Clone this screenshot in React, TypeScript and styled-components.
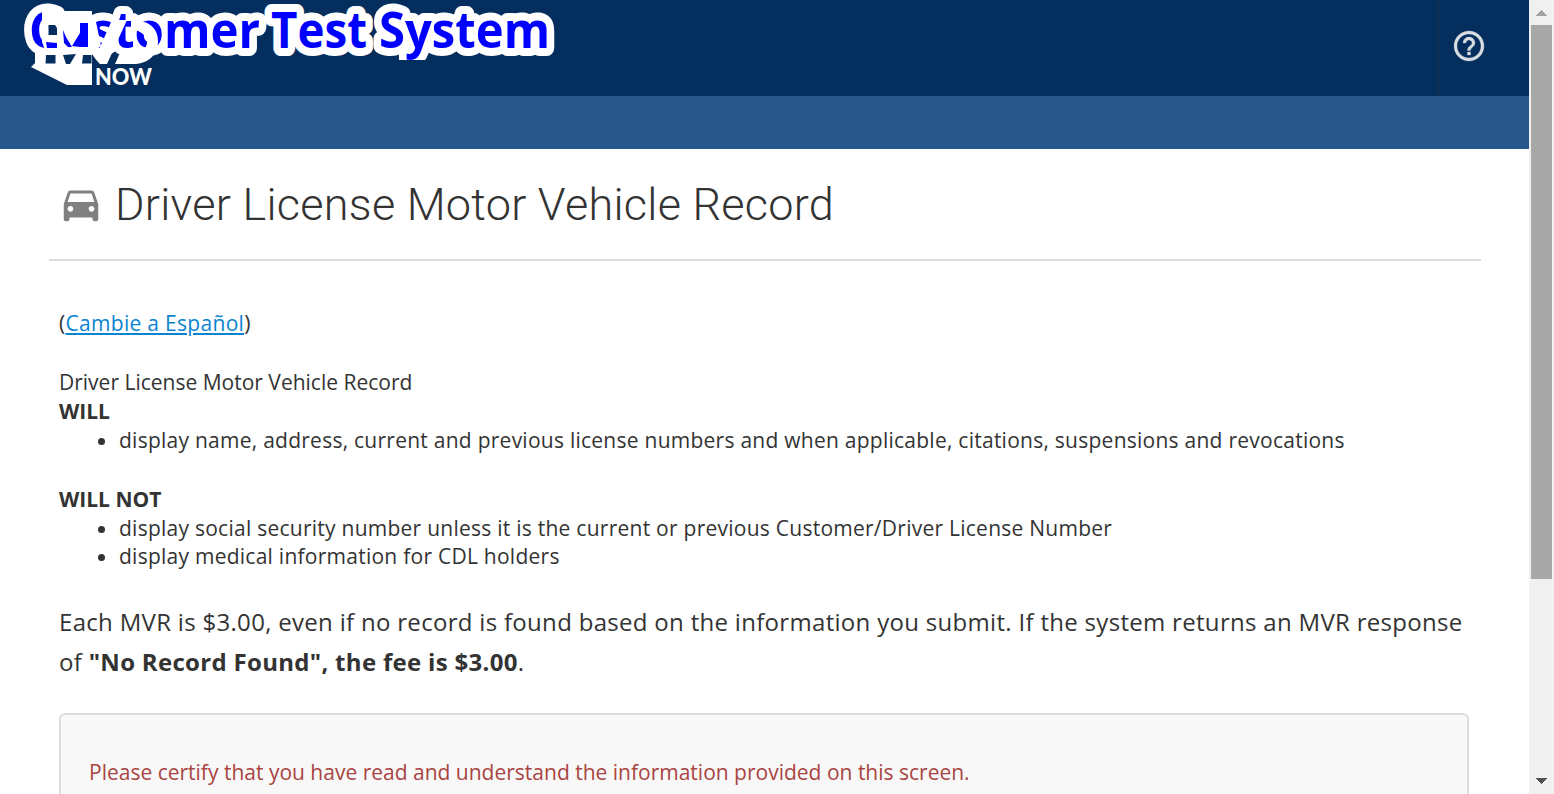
import React from "react";
import styled, { createGlobalStyle } from "styled-components";

const GlobalStyle = createGlobalStyle`
  * { box-sizing: border-box; }
  html, body { margin: 0; height: 100%; overflow: hidden; background: #fff; }
  body { font-family: "Open Sans", "Liberation Sans", sans-serif; font-size: 21px; color: #333; }
`;

const Window = styled.div`
  display: flex;
  width: 100vw;
  height: 100vh;
  overflow: hidden;
`;

const Page = styled.div`
  flex: 1;
  min-width: 0;
  overflow: hidden;
`;

const Header = styled.header`
  display: flex;
  justify-content: space-between;
  height: 96px;
  background: #032e5e;
`;

const Logo = styled.svg`
  display: block;
  width: 600px;
  height: 96px;
`;

const HelpButton = styled.button`
  display: flex;
  width: 92px;
  padding: 28px 0 0 12px;
  border: 0;
  border-left: 2px solid #12304f;
  background: transparent;
  color: #d9dde2;
`;

const NavBar = styled.nav`
  height: 53px;
  background: #28588b;
`;

const TitleBar = styled.div`
  display: flex;
  align-items: center;
  height: 112px;
  margin: 0 48px 0 49px;
  padding-left: 9px;
  border-bottom: 2px solid #ddd;
`;

const Title = styled.h1`
  margin: 2px 0 0 11px;
  font: 300 45px/60px Roboto, sans-serif;
  letter-spacing: 0.27px;
  white-space: nowrap;
`;

const Content = styled.main`
  padding: 48px 60px 0 59px;
  line-height: 29px;
`;

const Language = styled.div`
  margin-bottom: 30px;
  letter-spacing: 0.3px;
`;

const Link = styled.a`
  color: #0a84d0;
  text-decoration: underline;
`;

const Line = styled.div`
  white-space: nowrap;
`;

const List = styled.ul`
  margin: 0 0 30px;
  padding-left: 60px;
  line-height: 28.6px;
  letter-spacing: 0.252px;
  white-space: nowrap;
`;

const Fee = styled.p`
  margin: 31px 0;
  font-size: 24px;
  line-height: 40px;
  letter-spacing: 0.305px;
  white-space: nowrap;
`;

const Certify = styled.section`
  height: 300px;
  padding: 43px 28px;
  border: 2px solid #ddd;
  border-radius: 6px;
  background: #f8f8f8;
  color: #a94442;
`;

const ScrollTrack = styled.div`
  display: flex;
  flex-direction: column;
  align-items: center;
  width: 25px;
  background: #f0f0f0;
`;

const ScrollThumb = styled.div`
  width: 21px;
  height: 554px;
  margin-bottom: auto;
  background: #a8a8a8;
`;

const ScrollArrow = styled.svg`
  display: block;
  width: 25px;
  height: 25px;
`;

export default function App() {
  return (
    <Window>
      <GlobalStyle />
      <Page>
        <Header>
          <Logo viewBox="0 0 600 96">
            <g fontFamily="Open Sans" fontWeight="700" fontSize="49.5"
              fill="#00f" stroke="#fff" strokeWidth="16" strokeLinejoin="round" paintOrder="stroke">
              <text x="29" y="48" textLength="231" lengthAdjust="spacingAndGlyphs">Customer</text>
              <text x="271" y="48" textLength="96" lengthAdjust="spacingAndGlyphs">Test</text>
              <text x="379" y="48" textLength="171" lengthAdjust="spacingAndGlyphs">System</text>
            </g>
            <path d="M390 60H440V76H390Z" fill="#032e5e" />
            <g fill="#fff">
              <path d="M42 11H92V85H67L31 67L35 63V50H45L42 42Z" />
              <path d="M90 22H96L101 46 97 49 105 64H100L90 54Z" />
              <path d="M112 20H127L107 64H101L97 54Z" />
              <path d="M131 20C152 20 158 31 158 41C158 56 147 64 133 64H115L119 55L133 53C143 51 147 48 147 42C147 34 138 30 131 29Z" />
              <text x="95" y="84.5" fontFamily="Lato" fontWeight="900" fontSize="22" textLength="57" lengthAdjust="spacingAndGlyphs">NOW</text>
            </g>
            <path d="M48.5 25H55L57 28V35H48.5ZM46 55H55.5V63.5H45.5ZM63 55L76 54 70 64H66ZM83 55H91.5V63.5H82ZM92 54L99 64H92Z" fill="#032e5e" />
            <path d="M46 42L57 43V48H47ZM63 30L66 37 72 47H68L64 43ZM80 23H88V47H80L72 46L80 33Z" fill="#00f" />
          </Logo>
          <HelpButton aria-label="Help">
            <svg width="36" height="36" viewBox="0 0 24 24" fill="currentColor" stroke="currentColor" strokeWidth="0.2">
              <path d="M11 18h2v-2h-2v2zm1-16C6.48 2 2 6.48 2 12s4.48 10 10 10 10-4.48 10-10S17.52 2 12 2zm0 18c-4.41 0-8-3.59-8-8s3.59-8 8-8 8 3.59 8 8-3.59 8-8 8zm0-14c-2.21 0-4 1.79-4 4h2c0-1.1.9-2 2-2s2 .9 2 2c0 2-3 1.75-3 5h2c0-2.25 3-2.5 3-5 0-2.21-1.79-4-4-4z" />
            </svg>
          </HelpButton>
        </Header>
        <NavBar />
        <TitleBar>
          <svg width="46" height="46" viewBox="0 0 24 24" fill="#808080">
            <path d="M18.92 6.01C18.72 5.42 18.16 5 17.5 5h-11c-.66 0-1.21.42-1.42 1.01L3 12v8c0 .55.45 1 1 1h1c.55 0 1-.45 1-1v-1h12v1c0 .55.45 1 1 1h1c.55 0 1-.45 1-1v-8l-2.08-5.99zM6.5 16c-.83 0-1.5-.67-1.5-1.5S5.67 13 6.5 13s1.5.67 1.5 1.5S7.33 16 6.5 16zm11 0c-.83 0-1.5-.67-1.5-1.5s.67-1.5 1.5-1.5 1.5.67 1.5 1.5-.67 1.5-1.5 1.5zM5 11l1.5-4.5h11L19 11H5z" />
          </svg>
          <Title>Driver License Motor Vehicle Record</Title>
        </TitleBar>
        <Content>
          <Language>(<Link>Cambie a Español</Link>)</Language>
          <Line>Driver License Motor Vehicle Record</Line>
          <Line><b>WILL</b></Line>
          <List>
            <li>display name, address, current and previous license numbers and when applicable, citations, suspensions and revocations</li>
          </List>
          <Line><b>WILL NOT</b></Line>
          <List>
            <li>display social security number unless it is the current or previous Customer/Driver License Number</li>
            <li>display medical information for CDL holders</li>
          </List>
          <Fee>
            Each MVR is $3.00, even if no record is found based on the information you submit. If the system returns an MVR response
            <br />
            of <b>"No Record Found", the fee is $3.00</b>.
          </Fee>
          <Certify>Please certify that you have read and understand the information provided on this screen.</Certify>
        </Content>
      </Page>
      <ScrollTrack>
        <ScrollArrow viewBox="0 0 25 25" shapeRendering="crispEdges"><path d="M7 16L12.5 10L18 16Z" fill="#a3a3a3" /></ScrollArrow>
        <ScrollThumb />
        <ScrollArrow viewBox="0 0 25 25" shapeRendering="crispEdges"><path d="M7 9L12.5 15L18 9Z" fill="#505050" /></ScrollArrow>
      </ScrollTrack>
    </Window>
  );
}
